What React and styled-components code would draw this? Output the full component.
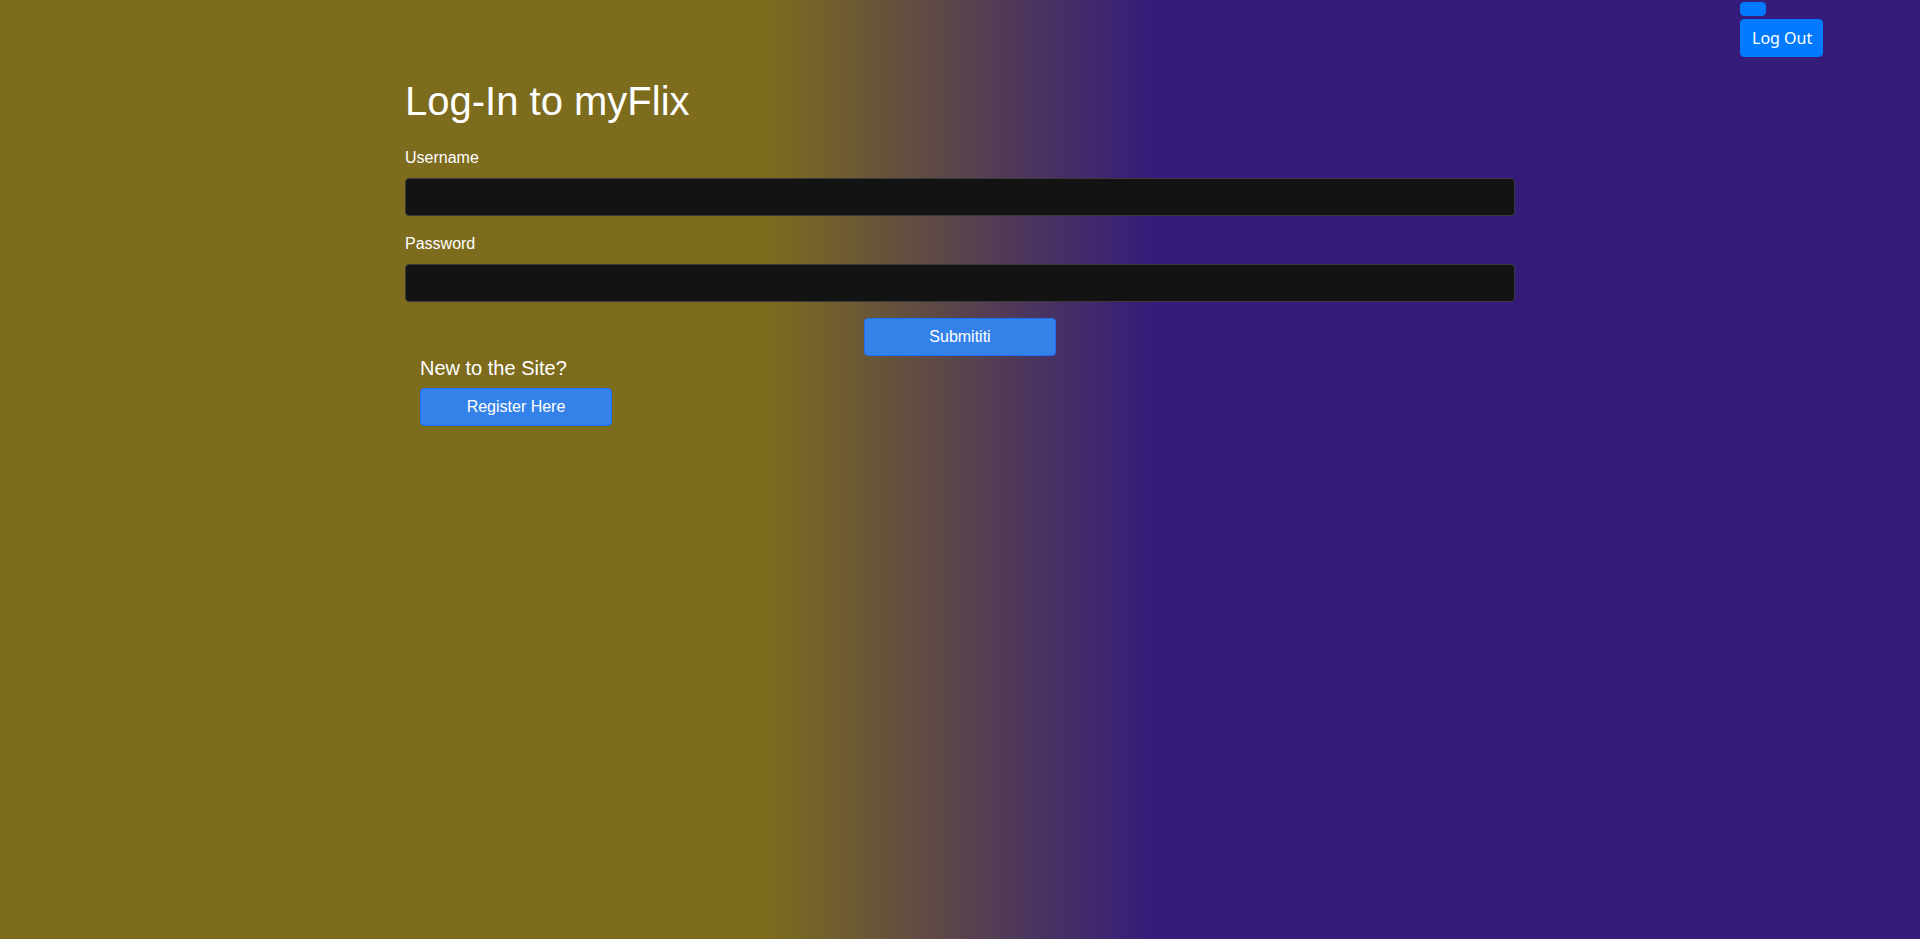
import React from "react";
import styled, { createGlobalStyle } from "styled-components";

const GlobalStyle = createGlobalStyle`
  html, body { margin: 0; padding: 0; }
  body {
    min-height: 100vh;
    background: linear-gradient(90deg, #7d6b1e 40%, #351c7b 60%);
    color: #ffffff;
    font-family: "Liberation Sans", Arial, sans-serif;
  }
  * { box-sizing: border-box; }
`;

const Page = styled.div`
  min-height: 100vh;
`;

const TopBar = styled.nav`
  display: flex;
  justify-content: flex-end;
  padding: 2px 97px 0 0;
`;

const NavColumn = styled.div`
  display: flex;
  flex-direction: column;
  align-items: flex-start;
  gap: 3px;
`;

const NavButton = styled.button`
  display: inline-block;
  background: #007bff;
  border: 1px solid #007bff;
  border-radius: 4px;
  color: #ffffff;
  font-family: "Noto Sans", "Open Sans", sans-serif;
  font-size: 16px;
  line-height: 24px;
  padding: ${(p) => (p.$empty ? "6px 12px" : "6px 11px")};
  height: ${(p) => (p.$empty ? "14px" : "38px")};
  width: ${(p) => (p.$empty ? "26px" : "83px")};
  cursor: pointer;
  white-space: nowrap;
`;

const Container = styled.main`
  max-width: 1140px;
  margin: 0 auto;
  padding: 20px 15px 0;
`;

const Title = styled.h1`
  margin: 0 0 21px;
  font-size: 40px;
  line-height: 48px;
  font-weight: 400;
`;

const FormGroup = styled.div`
  margin-bottom: 16px;
`;

const Label = styled.label`
  display: block;
  font-size: 16px;
  line-height: 24px;
  margin-bottom: 8px;
`;

const Input = styled.input`
  display: block;
  width: 100%;
  height: 38px;
  background: #131313;
  border: 1px solid #3b3b3b;
  border-radius: 4px;
  color: #ffffff;
  font-size: 16px;
  padding: 6px 12px;
  outline: none;
`;

const Centered = styled.div`
  display: flex;
  justify-content: center;
`;

const PrimaryButton = styled.button`
  width: 192px;
  height: 38px;
  background: #3482e9;
  border: 1px solid #1b72f2;
  border-radius: 4px;
  color: #ffffff;
  font-family: "Liberation Sans", Arial, sans-serif;
  font-size: 16px;
  line-height: 24px;
  padding: 6px 12px;
  cursor: pointer;
`;

const RegisterBlock = styled.div`
  padding-left: 15px;
`;

const SubTitle = styled.h5`
  margin: 0 0 8px;
  font-size: 20px;
  line-height: 24px;
  font-weight: 400;
`;

export default function App() {
  return (
    <Page>
      <GlobalStyle />
      <TopBar>
        <NavColumn>
          <NavButton $empty aria-label="menu" />
          <NavButton>Log Out</NavButton>
        </NavColumn>
      </TopBar>
      <Container>
        <Title>Log-In to myFlix</Title>
        <form onSubmit={(e) => e.preventDefault()}>
          <FormGroup>
            <Label htmlFor="username">Username</Label>
            <Input id="username" type="text" />
          </FormGroup>
          <FormGroup>
            <Label htmlFor="password">Password</Label>
            <Input id="password" type="password" />
          </FormGroup>
          <Centered>
            <PrimaryButton type="submit">Submititi</PrimaryButton>
          </Centered>
        </form>
        <RegisterBlock>
          <SubTitle>New to the Site?</SubTitle>
          <PrimaryButton type="button">Register Here</PrimaryButton>
        </RegisterBlock>
      </Container>
    </Page>
  );
}
